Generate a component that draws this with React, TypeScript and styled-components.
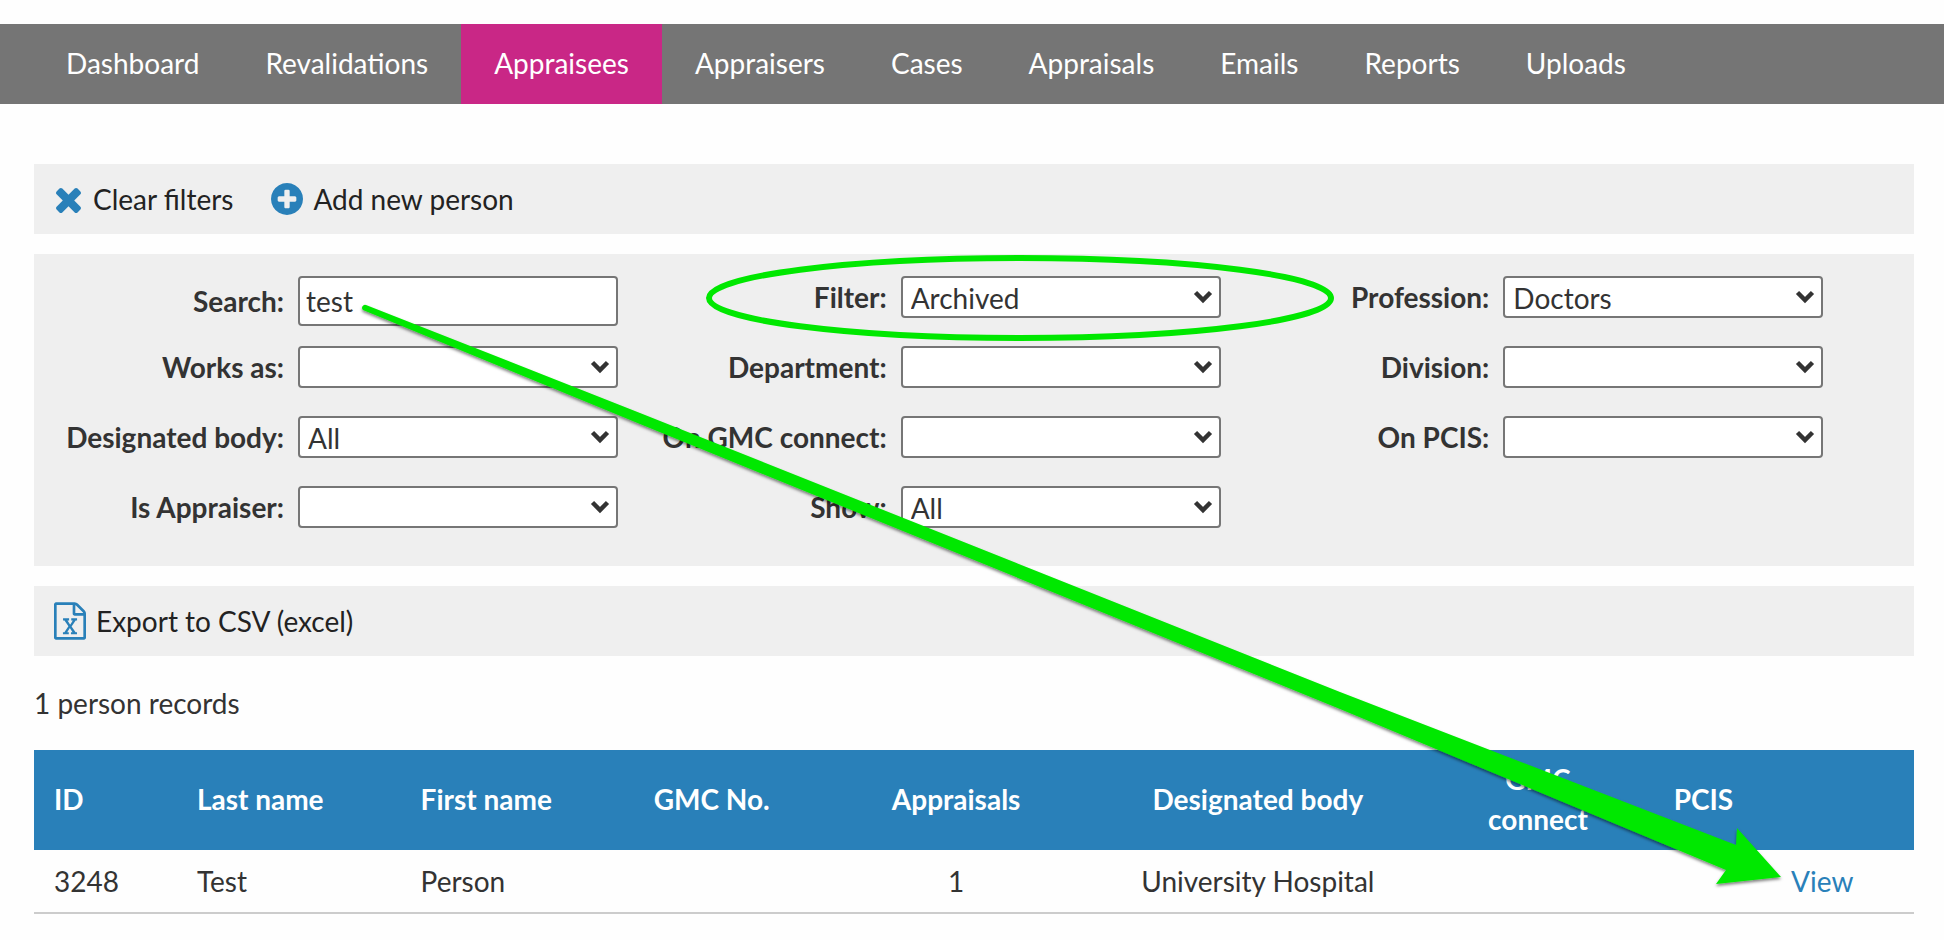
import React from "react";
import styled, { createGlobalStyle, css } from "styled-components";

const blue = "#2980b9";
const ink = "#333";
const green = "#00e800";

const GlobalStyle = createGlobalStyle`
  *, *::before, *::after { box-sizing: border-box; }
  body {
    margin: 0;
    background: #fefefe;
    color: ${ink};
    font-family: Lato, "Liberation Sans", sans-serif;
    font-size: 28px;
    line-height: 40px;
  }
`;

const Page = styled.div`
  position: relative;
  padding-top: 24px;
`;

const Nav = styled.nav`
  display: flex;
  flex-wrap: wrap;
  padding: 0 33px;
  background: #757575;
`;

const NavLink = styled.a<{ $active?: boolean }>`
  padding: 19px 33px 21px;
  color: #fff;
  text-decoration: none;
  background: ${(p) => (p.$active ? "#c92786" : "transparent")};
`;

const Main = styled.main`
  padding: 60px 30px 20px 34px;
`;

const Toolbar = styled.div`
  display: flex;
  flex-wrap: wrap;
  gap: 38px;
  padding: 15px 20px;
  background: #efefef;
`;

const ToolButton = styled.button`
  display: inline-flex;
  align-items: center;
  gap: 10px;
  padding: 0;
  border: 0;
  background: none;
  color: #222;
  font: inherit;
  cursor: pointer;

  svg {
    flex: none;
    fill: ${blue};
  }
`;

const FilterForm = styled.form`
  display: grid;
  grid-template-columns: repeat(3, minmax(0, 1fr));
  grid-auto-rows: minmax(70px, auto);
  align-items: start;
  margin: 20px 0;
  padding: 22px 72px 10px 0;
  background: #efefef;
`;

const FilterColumn = styled.div`
  display: contents;
`;

const Field = styled.div<{ $column: number; $row: number }>`
  grid-column: ${(p) => p.$column};
  grid-row: ${(p) => p.$row};
  display: grid;
  grid-template-columns: 250px minmax(0, 320px);
  column-gap: 14px;
  align-items: center;
`;

const FieldLabel = styled.label`
  font-weight: 700;
  text-align: right;
  white-space: nowrap;
`;

const control = css`
  display: block;
  width: 100%;
  border: 2px solid #767676;
  border-radius: 4px;
  background: #fff;
  color: ${ink};
  font: inherit;
`;

const TextInput = styled.input`
  ${control}
  height: 50px;
  padding: 0 6px;
`;

const SelectBox = styled.div`
  position: relative;

  svg {
    position: absolute;
    top: 14px;
    right: 8px;
    pointer-events: none;
  }
`;

const Select = styled.select`
  ${control}
  appearance: none;
  height: 42px;
  padding: 0 36px 2px 8px;
`;

const Count = styled.p`
  margin: 27px 0;
`;

const Table = styled.table`
  width: 100%;
  table-layout: fixed;
  border-spacing: 0;
`;

const Col = styled.col<{ $share: number }>`
  width: ${(p) => p.$share}%;
`;

const HeadCell = styled.th<{ $center?: boolean }>`
  padding: 9px 20px 11px;
  background: ${blue};
  color: #fff;
  font-weight: 700;
  text-align: ${(p) => (p.$center ? "center" : "left")};
`;

const Cell = styled.td<{ $center?: boolean }>`
  padding: 11px 20px;
  border-bottom: 2px solid #ccc;
  text-align: ${(p) => (p.$center ? "center" : "left")};
`;

const ViewLink = styled.a`
  color: ${blue};
  text-decoration: none;
`;

const Annotations = styled.svg`
  position: absolute;
  top: 0;
  left: 0;
  pointer-events: none;
`;

const ClearIcon = () => (
  <svg width="29" height="28" viewBox="207 223 1378 1331" aria-hidden="true">
    <path d="M1490 1322q0 40-28 68l-136 136q-28 28-68 28t-68-28l-294-294-294 294q-28 28-68 28t-68-28l-136-136q-28-28-28-68t28-68l294-294-294-294q-28-28-28-68t28-68l136-136q28-28 68-28t68 28l294 294 294-294q28-28 68-28t68 28l136 136q28 28 28 68t-28 68l-294 294 294 294q28 28 28 68z" />
  </svg>
);

const AddIcon = () => (
  <svg width="32" height="32" viewBox="128 128 1536 1536" aria-hidden="true">
    <path d="M1344 960v-128q0-26-19-45t-45-19h-256v-256q0-26-19-45t-45-19h-128q-26 0-45 19t-19 45v256h-256q-26 0-45 19t-19 45v128q0 26 19 45t45 19h256v256q0 26 19 45t45 19h128q26 0 45-19t19-45v-256h256q26 0 45-19t19-45zm320-64q0 209-103 385.5t-279.5 279.5-385.5 103-385.5-103-279.5-279.5-103-385.5 103-385.5 279.5-279.5 385.5-103 385.5 103 279.5 279.5 103 385.5z" />
  </svg>
);

const ExcelIcon = () => (
  <svg width="32" height="38" viewBox="128 0 1536 1792" aria-hidden="true">
    <path d="M1596 380q28 28 48 76t20 88v1152q0 40-28 68t-68 28h-1344q-40 0-68-28t-28-68v-1600q0-40 28-68t68-28h896q40 0 88 20t76 48zm-444-244v376h376q-10-29-22-41l-313-313q-12-12-41-22zm384 1528v-1024h-416q-40 0-68-28t-28-68v-416h-768v1536h1280zm-979-234v106h281v-106h-75l103-161q5-7 10-16.500t7.500-13.500 3.500-4h2q1 4 5 10 2 4 4.500 7.500t6 8 6.500 8.500l107 161h-76v106h291v-106h-68l-192-273 195-282h67v-107h-279v107h74l-103 159q-4 7-10 16.500t-9 13.500l-2 3h-2q-1-4-5-10-6-11-17-23l-106-159h76v-107h-290v107h68l189 272-194 283h-68z" />
  </svg>
);

const Chevron = () => (
  <svg width="20" height="14" viewBox="0 0 20 14" aria-hidden="true">
    <path d="M2.500 2.500L10 10L17.500 2.500" fill="none" stroke={ink} strokeWidth="4.500" />
  </svg>
);

const navItems = [
  "Dashboard",
  "Revalidations",
  "Appraisees",
  "Appraisers",
  "Cases",
  "Appraisals",
  "Emails",
  "Reports",
  "Uploads",
];

type Filter = { id: string; label: string; value: string; text?: boolean };

const filterColumns: Filter[][] = [
  [
    { id: "search", label: "Search:", value: "test", text: true },
    { id: "works-as", label: "Works as:", value: "" },
    { id: "designated-body", label: "Designated body:", value: "All" },
    { id: "is-appraiser", label: "Is Appraiser:", value: "" },
  ],
  [
    { id: "filter", label: "Filter:", value: "Archived" },
    { id: "department", label: "Department:", value: "" },
    { id: "gmc-connect", label: "On GMC connect:", value: "" },
    { id: "show", label: "Show:", value: "All" },
  ],
  [
    { id: "profession", label: "Profession:", value: "Doctors" },
    { id: "division", label: "Division:", value: "" },
    { id: "pcis", label: "On PCIS:", value: "" },
  ],
];

type Column = { key: string; title: string; share: number; center?: boolean };

const columns: Column[] = [
  { key: "id", title: "ID", share: 7.6 },
  { key: "last", title: "Last name", share: 11.9 },
  { key: "first", title: "First name", share: 12.4 },
  { key: "gmc", title: "GMC No.", share: 10.8 },
  { key: "appraisals", title: "Appraisals", share: 12.7, center: true },
  { key: "body", title: "Designated body", share: 19.4, center: true },
  { key: "connect", title: "GMC connect", share: 10.4, center: true },
  { key: "pcis", title: "PCIS", share: 7.2, center: true },
  { key: "view", title: "", share: 7.6 },
];

const people: Record<string, string>[] = [
  { id: "3248", last: "Test", first: "Person", appraisals: "1", body: "University Hospital" },
];

export default function App() {
  return (
    <Page>
      <GlobalStyle />
      <Nav>
        {navItems.map((item) => (
          <NavLink
            key={item}
            href="#"
            $active={item === "Appraisees"}
            aria-current={item === "Appraisees" ? "page" : undefined}
          >
            {item}
          </NavLink>
        ))}
      </Nav>
      <Main>
        <Toolbar>
          <ToolButton type="button">
            <ClearIcon />
            Clear filters
          </ToolButton>
          <ToolButton type="button">
            <AddIcon />
            Add new person
          </ToolButton>
        </Toolbar>
        <FilterForm>
          {filterColumns.map((filters, c) => (
            <FilterColumn key={c}>
              {filters.map((f, r) => (
                <Field key={f.id} $column={c + 1} $row={r + 1}>
                  <FieldLabel htmlFor={f.id}>{f.label}</FieldLabel>
                  {f.text ? (
                    <TextInput id={f.id} type="text" defaultValue={f.value} />
                  ) : (
                    <SelectBox>
                      <Select id={f.id} defaultValue={f.value}>
                        <option value={f.value}>{f.value}</option>
                      </Select>
                      <Chevron />
                    </SelectBox>
                  )}
                </Field>
              ))}
            </FilterColumn>
          ))}
        </FilterForm>
        <Toolbar>
          <ToolButton type="button">
            <ExcelIcon />
            Export to CSV (excel)
          </ToolButton>
        </Toolbar>
        <Count>1 person records</Count>
        <Table>
          <colgroup>
            {columns.map((c) => (
              <Col key={c.key} $share={c.share} />
            ))}
          </colgroup>
          <thead>
            <tr>
              {columns.map((c) => (
                <HeadCell key={c.key} scope="col" $center={c.center}>
                  {c.title}
                </HeadCell>
              ))}
            </tr>
          </thead>
          <tbody>
            {people.map((person) => (
              <tr key={person.id}>
                {columns.map((c) => (
                  <Cell key={c.key} $center={c.center}>
                    {c.key === "view" ? <ViewLink href="#">View</ViewLink> : person[c.key]}
                  </Cell>
                ))}
              </tr>
            ))}
          </tbody>
        </Table>
      </Main>
      <Annotations width="1800" height="900" viewBox="0 0 1800 900" aria-hidden="true">
        <defs>
          <filter id="arrow-shadow" x="-5%" y="-5%" width="110%" height="110%">
            <feDropShadow dx="0" dy="2" stdDeviation="1.500" floodColor="#000" floodOpacity="0.5" />
          </filter>
        </defs>
        <ellipse cx="1020" cy="298" rx="311" ry="40" fill="none" stroke={green} strokeWidth="6" />
        <path
          d="M366 305L640 413L1340 692L1736 845L1737 828L1781 877L1716 884L1726 870L1340 709L640 424L363 310A3 3 0 0 1 366 305Z"
          fill={green}
          filter="url(#arrow-shadow)"
        />
      </Annotations>
    </Page>
  );
}
